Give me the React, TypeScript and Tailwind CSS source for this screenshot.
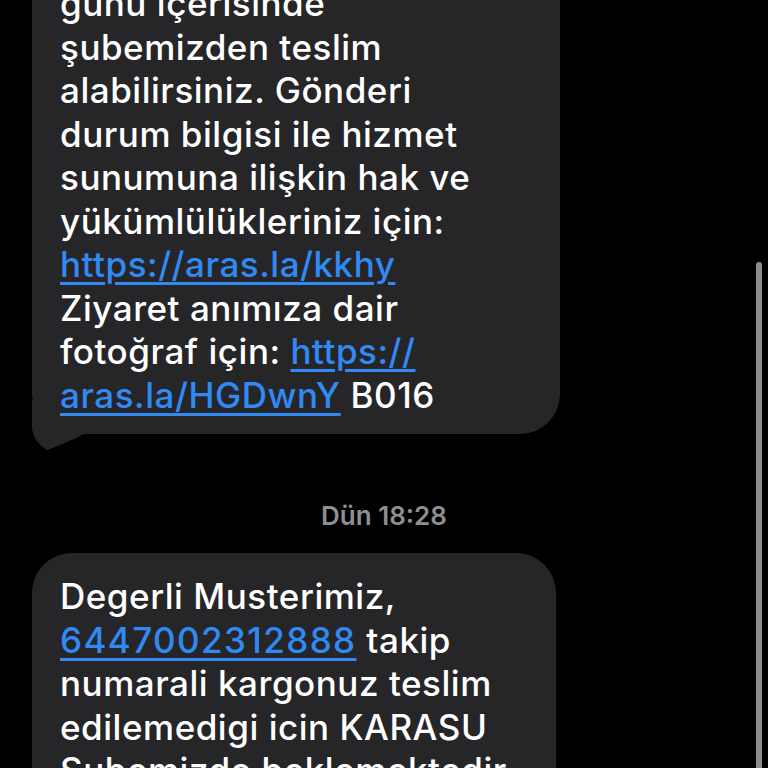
const linkCls =
  "text-[#3189f4] underline decoration-[2.5px] underline-offset-[5px]";

function Tail() {
  return (
    <svg
      className="absolute left-0 bottom-[-16px] overflow-visible"
      width="60"
      height="50"
      viewBox="0 0 60 50"
    >
      <path
        d="M0 0 L0 28 C1 38 6 44 15 50 C26 46 38 41 52 34 L52 0 Z"
        fill="#262628"
      />
    </svg>
  );
}

export default function App() {
  return (
    <div
      className="relative h-screen w-full overflow-hidden bg-black text-white"
      style={{ fontFamily: "Inter, 'Noto Sans', sans-serif" }}
    >
      <div className="flex flex-col">
        {/* incoming message, top part scrolled away */}
        <div className="relative ml-[32px] mt-[-78px] w-[528px] rounded-[40px] bg-[#262628] pl-[28px] pr-4 pt-[60px] pb-[17px]">
          <Tail />
          <div className="relative whitespace-nowrap text-[35px] font-medium leading-[43.5px] tracking-[0.015em]">
            günü içerisinde
            <br />
            şubemizden teslim
            <br />
            alabilirsiniz. Gönderi
            <br />
            durum bilgisi ile hizmet
            <br />
            sunumuna ilişkin hak ve
            <br />
            yükümlülükleriniz için:
            <br />
            <span className={linkCls}>https://aras.la/kkhy</span>
            <br />
            Ziyaret anımıza dair
            <br />
            fotoğraf için: <span className={linkCls}>https://</span>
            <br />
            <span className={linkCls}>aras.la/HGDwnY</span> B016
          </div>
        </div>

        <div className="mt-[68px] text-center text-[26px] font-semibold leading-[28px] text-[#8e8e93]">
          Dün 18:28
        </div>

        <div className="ml-[32px] mt-[23px] w-[524px] rounded-[40px] bg-[#262628] pl-[28px] pr-4 pt-[22px] pb-[17px]">
          <div className="whitespace-nowrap text-[35px] font-medium leading-[43.5px] tracking-[0.015em]">
            Degerli Musterimiz,
            <br />
            <span className={`${linkCls} tracking-[0.04em]`}>6447002312888</span> takip
            <br />
            numarali kargonuz teslim
            <br />
            edilemedigi icin KARASU
            <br />
            Subemizde beklemektedir.
          </div>
        </div>
      </div>

      {/* scroll indicator */}
      <div className="absolute right-[6px] top-[262px] h-[540px] w-[6px] rounded-full bg-[#8c8c8c]" />
    </div>
  );
}
